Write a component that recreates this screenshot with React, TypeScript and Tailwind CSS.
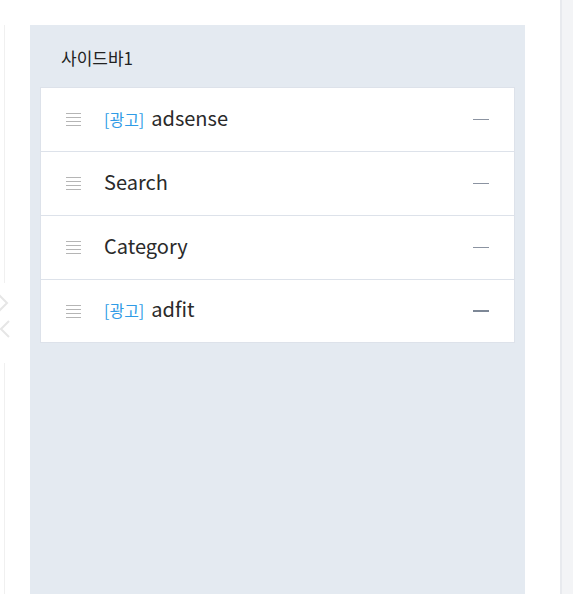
// Sidebar widget list editor (static mock).

type Widget = {
  label: string;
  ad?: boolean;
  strong?: boolean;
};

const WIDGETS: Widget[] = [
  { label: "adsense", ad: true },
  { label: "Search" },
  { label: "Category" },
  { label: "adfit", ad: true, strong: true },
];

function DragHandle() {
  return (
    <div className="flex w-[15px] flex-col gap-[3px]">
      <span className="h-px w-full bg-[#b5b5b5]" />
      <span className="h-px w-full bg-[#b5b5b5]" />
      <span className="h-px w-full bg-[#b5b5b5]" />
      <span className="h-px w-full bg-[#b5b5b5]" />
    </div>
  );
}

function Chevron({ dir }: { dir: "left" | "right" }) {
  return (
    <svg width="12" height="20" viewBox="0 0 12 20" aria-hidden>
      <path
        d={dir === "right" ? "M1 2l8 8-8 8" : "M11 2l-8 8 8 8"}
        fill="none"
        stroke="#e6e6e6"
        strokeWidth="2"
      />
    </svg>
  );
}

export default function App() {
  return (
    <div
      className="flex h-[594px] w-[573px] overflow-hidden bg-white"
      style={{ fontFamily: '"Noto Sans CJK KR", "Noto Sans", sans-serif' }}
    >
      {/* left rail — faint divider with collapse chevrons */}
      <div className="flex w-[30px] shrink-0 flex-col items-start pt-[25px]">
        <div className="ml-[4px] h-[258px] w-px bg-[#f0f0f0]" />
        <div className="-ml-[2px] mt-[10px] flex flex-col gap-[6px]">
          <Chevron dir="right" />
          <Chevron dir="left" />
        </div>
        <div className="ml-[4px] mt-[24px] w-px flex-1 bg-[#f0f0f0]" />
      </div>

      {/* sidebar panel */}
      <div className="mt-[25px] flex w-[495px] shrink-0 flex-col bg-[#e4eaf1] px-[10px]">
        <div className="flex h-[62px] items-center pl-[21px] pt-[4px] text-[17px] text-[#222]">
          사이드바1
        </div>
        <ul className="border border-[#dde2ea] bg-white">
          {WIDGETS.map((w, i) => (
            <li
              key={w.label}
              className={
                "flex items-center pl-[25px] pr-[25px] " +
                (i < WIDGETS.length - 1 ? "h-[64px] border-b border-[#dde2ea]" : "h-[62px]")
              }
            >
              <DragHandle />
              <div className="ml-[23px] flex flex-1 items-baseline gap-[7px] pb-[4px]">
                {w.ad && <span className="text-[16px] text-[#2f9be6]">[광고]</span>}
                <span className="text-[20px] text-[#2a2a2a]">{w.label}</span>
              </div>
              <span
                className={
                  "w-[16px] " + (w.strong ? "h-[2px] bg-[#7d8796]" : "h-px bg-[#8b93a1]")
                }
              />
            </li>
          ))}
        </ul>
      </div>

      {/* right gutter */}
      <div className="w-[35px] shrink-0 bg-white" />
      <div className="flex-1 border-l-2 border-[#e8eaee] bg-[#f3f4f6]" />
    </div>
  );
}
